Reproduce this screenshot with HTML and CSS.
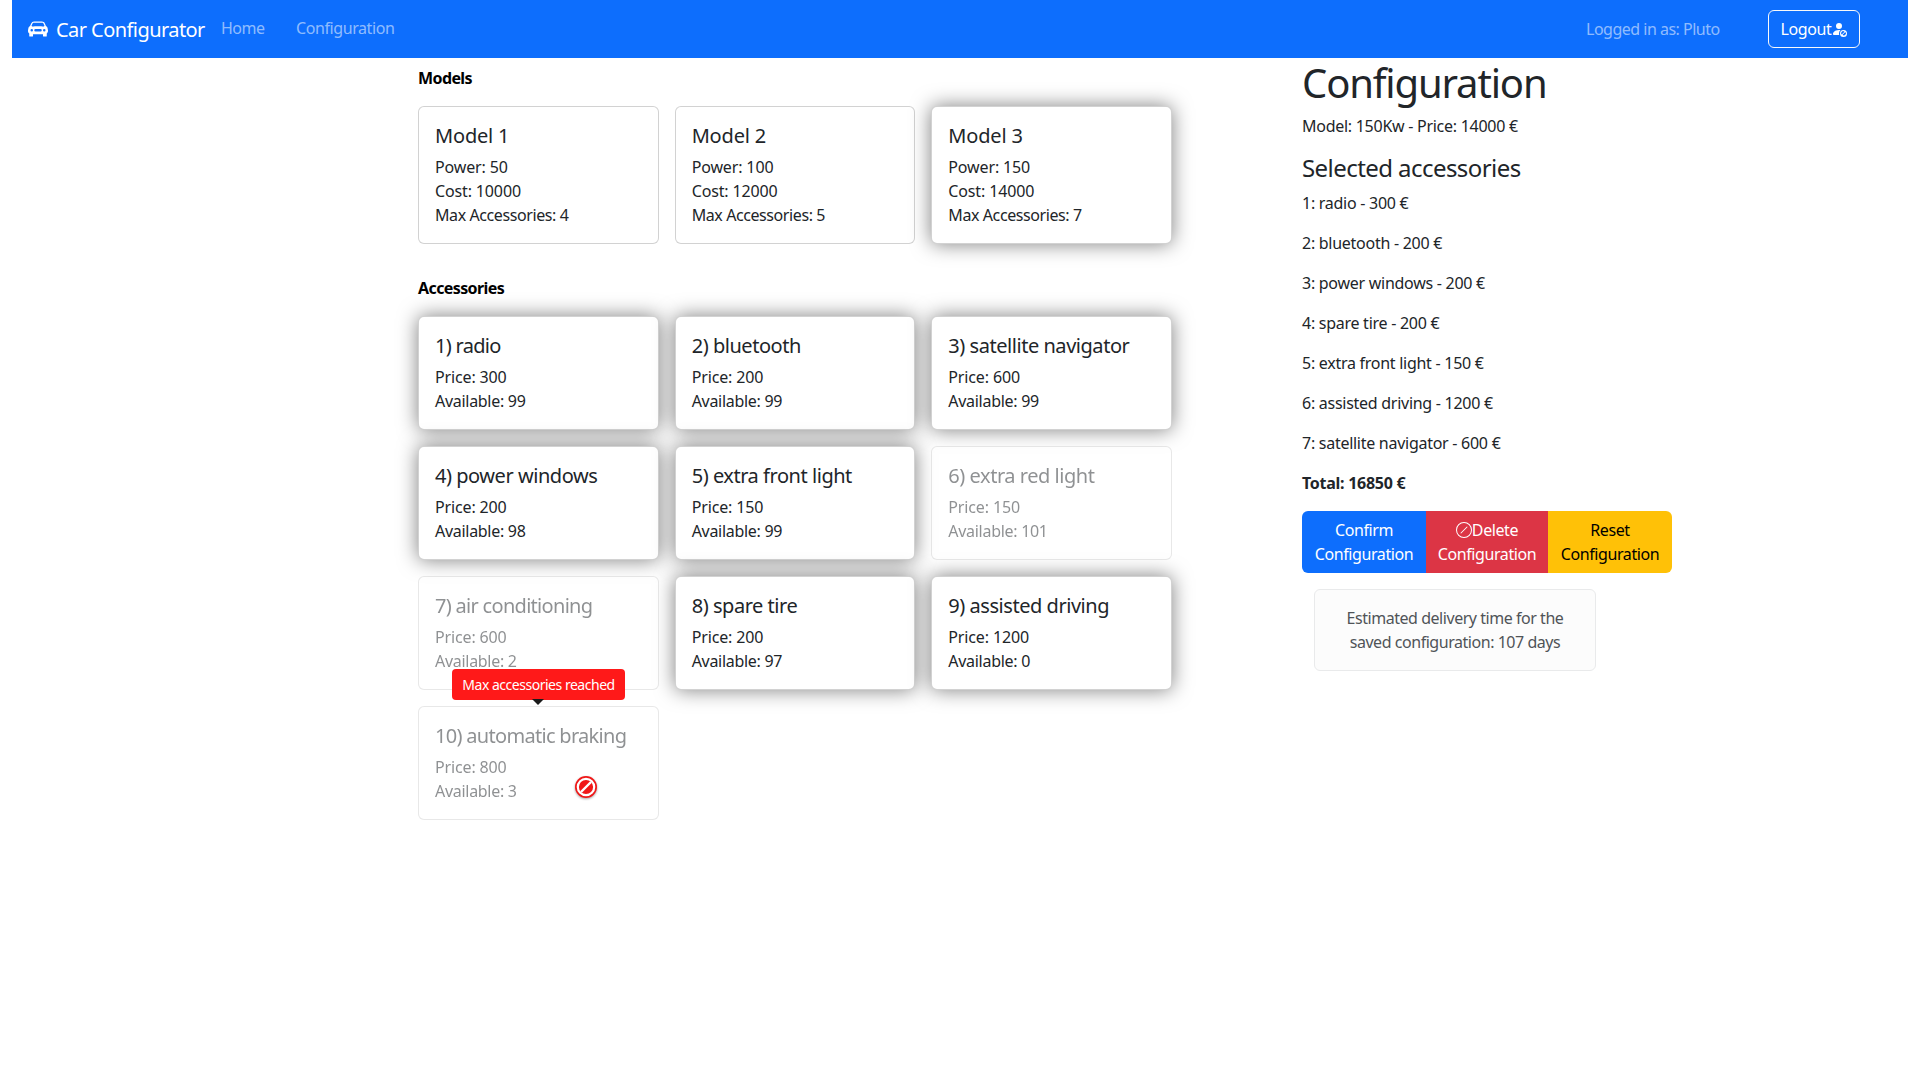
FILE: index.html
```html
<!DOCTYPE html>
<html lang="en">
<head>
<meta charset="utf-8">
<title>Car Configurator</title>
<link rel="stylesheet" href="styles.css">
</head>
<body>
<nav class="navbar">
  <a class="brand"><svg class="car" viewBox="0 0 16 16"><path fill-rule="evenodd" fill="currentColor" d="M2.52 3.515A2.5 2.5 0 0 1 4.82 2h6.362c1 0 1.904.596 2.298 1.515l.792 1.848c.075.175.21.319.38.404.5.25.855.715.965 1.262l.335 1.679c.033.161.049.325.049.49v.413c0 .814-.39 1.543-1 1.997V13.5a.5.5 0 0 1-.5.5h-2a.5.5 0 0 1-.5-.5v-1.338c-1.292.048-2.745.088-4 .088s-2.708-.04-4-.088V13.5a.5.5 0 0 1-.5.5h-2a.5.5 0 0 1-.5-.5v-1.892c-.61-.454-1-1.183-1-1.997v-.413a2.5 2.5 0 0 1 .049-.49l.335-1.68c.11-.546.465-1.012.964-1.261a.807.807 0 0 0 .381-.404l.792-1.848ZM3 10a1 1 0 1 0 0-2 1 1 0 0 0 0 2Zm10 0a1 1 0 1 0 0-2 1 1 0 0 0 0 2ZM6 8a1 1 0 0 0 0 2h4a1 1 0 1 0 0-2H6ZM2.906 5.189a.51.51 0 0 0 .497.731c.91-.073 3.35-.17 4.597-.17 1.247 0 3.688.097 4.597.17a.51.51 0 0 0 .497-.731l-.956-1.913A.5.5 0 0 0 11.691 3H4.309a.5.5 0 0 0-.447.276L2.906 5.19Z"/></svg><span class="brand-text">Car Configurator</span></a>
  <a class="nav-link home">Home</a>
  <a class="nav-link">Configuration</a>
  <span class="user">Logged in as: Pluto</span>
  <button class="logout">Logout<svg class="person" viewBox="0 0 16 16" fill="currentColor"><path d="M11 5a3 3 0 1 1-6 0 3 3 0 0 1 6 0Zm-9 8c0 1 1 1 1 1h5.256A4.493 4.493 0 0 1 8 12.5a4.49 4.49 0 0 1 1.544-3.393C9.077 9.038 8.564 9 8 9c-5 0-6 3-6 4Z"/><path d="M16 12.5a3.5 3.5 0 1 1-7 0 3.5 3.5 0 0 1 7 0Zm-1.679-1.493-2.828 2.829a1.5 1.5 0 0 0 2.828-2.83ZM10.707 13.5l2.828-2.829a2 2 0 0 0-2.828 2.829Z"/></svg></button>
</nav>
<main class="content">
  <section class="catalog">
    <h2 class="label">Models</h2>
    <div class="cards models">
      <article class="card"><h5>Model 1</h5><p>Power: 50</p><p>Cost: 10000</p><p class="limit">Max Accessories: 4</p></article>
      <article class="card"><h5>Model 2</h5><p>Power: 100</p><p>Cost: 12000</p><p class="limit">Max Accessories: 5</p></article>
      <article class="card selected"><h5>Model 3</h5><p>Power: 150</p><p>Cost: 14000</p><p class="limit">Max Accessories: 7</p></article>
    </div>
    <h2 class="label">Accessories</h2>
    <div class="cards">
      <article class="card selected"><h5 class="tight">1) radio</h5><p>Price: 300</p><p class="stock">Available: 99</p></article>
      <article class="card selected"><h5>2) bluetooth</h5><p>Price: 200</p><p class="stock">Available: 99</p></article>
      <article class="card selected"><h5>3) satellite navigator</h5><p>Price: 600</p><p class="stock">Available: 99</p></article>
      <article class="card selected"><h5>4) power windows</h5><p>Price: 200</p><p class="stock">Available: 98</p></article>
      <article class="card selected"><h5>5) extra front light</h5><p>Price: 150</p><p class="stock">Available: 99</p></article>
      <article class="card disabled"><h5>6) extra red light</h5><p>Price: 150</p><p class="stock">Available: 101</p></article>
      <article class="card disabled"><h5 class="tight">7) air conditioning</h5><p>Price: 600</p><p class="stock">Available: 2</p></article>
      <article class="card selected"><h5>8) spare tire</h5><p>Price: 200</p><p class="stock">Available: 97</p></article>
      <article class="card selected"><h5>9) assisted driving</h5><p>Price: 1200</p><p class="stock">Available: 0</p></article>
      <div class="anchor">
        <article class="card disabled"><h5 class="tight">10) automatic braking</h5><p>Price: 800</p><p class="stock">Available: 3</p></article>
        <div class="tooltip">Max accessories reached</div>
        <svg class="cursor" viewBox="0 0 24 24"><circle cx="12" cy="12" r="11" fill="#f01818"/><circle cx="12" cy="12" r="8.2" fill="none" stroke="#fff" stroke-width="2.2"/><path d="M7 17 17 7" stroke="#fff" stroke-width="2.4"/></svg>
      </div>
    </div>
  </section>
  <aside class="summary">
    <h1>Configuration</h1>
    <p>Model: 150Kw - Price: 14000 €</p>
    <h4>Selected accessories</h4>
    <p>1: radio - 300 €</p>
    <p>2: bluetooth - 200 €</p>
    <p>3: power windows - 200 €</p>
    <p>4: spare tire - 200 €</p>
    <p>5: extra front light - 150 €</p>
    <p>6: assisted driving - 1200 €</p>
    <p>7: satellite navigator - 600 €</p>
    <p class="total">Total: 16850 €</p>
    <div class="buttons">
      <button class="confirm">Confirm<br>Configuration</button>
      <button class="delete"><svg class="slash" viewBox="0 0 16 16" fill="currentColor"><path d="M8 15A7 7 0 1 1 8 1a7 7 0 0 1 0 14zm0 1A8 8 0 1 0 8 0a8 8 0 0 0 0 16z"/><path d="M11.354 4.646a.5.5 0 0 0-.708 0l-6 6a.5.5 0 0 0 .708.708l6-6a.5.5 0 0 0 0-.708z"/></svg>Delete<br>Configuration</button>
      <button class="reset">Reset<br>Configuration</button>
    </div>
    <div class="estimate">Estimated delivery time for the<br>saved configuration: 107 days</div>
  </aside>
</main>
</body>
</html>
```
FILE: styles.css
```css
* { box-sizing: border-box; }
body { margin: 0; padding: 0 12px; background: #fff; color: #212529; font: 400 16px/24px "Noto Sans", sans-serif; }
h1, h2, h4, h5, p { margin: 0; font-weight: 400; }
button { font: inherit; color: #fff; border: 0; white-space: nowrap; padding: 0; letter-spacing: -.4px; }
.navbar { height: 58px; background: #0d6efd; display: flex; align-items: center; padding: 0 48px 0 16px; color: #fff; white-space: nowrap; }
.brand { display: flex; align-items: center; gap: 8px; width: 193px; font-size: 20px; line-height: 30px; letter-spacing: -.56px; }
.brand-text { padding-top: 2px; }
.car { width: 20px; height: 20px; flex: none; }
.nav-link { color: rgba(255, 255, 255, .55); padding-bottom: 2px; letter-spacing: -.41px; }
.nav-link.home { width: 75px; letter-spacing: -.5px; }
.user { margin-left: auto; width: 182px; color: rgba(255, 255, 255, .55); letter-spacing: -.5px; }
.logout { width: 92px; height: 38px; background: transparent; border: 1px solid #f8f9fa; border-radius: 6px; display: flex; align-items: center; justify-content: center; }
.person { width: 16px; height: 16px; }
.content { display: flex; align-items: flex-start; }
.catalog { width: 754px; margin-left: 406px; padding-top: 8px; }
.label { font-size: 16px; font-weight: 700; line-height: 24px; color: #000; margin-bottom: 16px; letter-spacing: -.6px; }
.cards { display: grid; grid-template-columns: repeat(3, 1fr); gap: 16px; }
.models { margin-bottom: 32px; }
.card { background: #fff; border: 1px solid rgba(0, 0, 0, .175); border-radius: 6px; padding: 16px; white-space: nowrap; letter-spacing: -.14px; }
.card h5 { font-size: 20px; line-height: 24px; padding-top: 1px; margin-bottom: 7px; letter-spacing: -.46px; }
.card h5.tight { letter-spacing: -.7px; }
.models .card h5 { letter-spacing: -.18px; }
.card .limit { letter-spacing: -.41px; }
.card .stock { letter-spacing: -.29px; }
.selected { box-shadow: 0 0 20px rgba(0, 0, 0, .5); }
.disabled { opacity: .5; }
.anchor { position: relative; }
.tooltip { position: absolute; left: 34px; top: -37px; width: 173px; height: 31px; border-radius: 4px; background: #ff1919; color: #fff; font-size: 14px; line-height: 31px; letter-spacing: -.48px; text-align: center; white-space: nowrap; }
.tooltip::after { content: ""; position: absolute; left: 80px; top: 30px; border: 6px solid transparent; border-top-color: #1a1a1a; border-bottom: 0; }
.cursor { position: absolute; left: 156px; top: 69px; width: 24px; height: 24px; filter: drop-shadow(0 1px 1px rgba(0, 0, 0, .35)); }
.summary { width: 370px; margin-left: 130px; white-space: nowrap; }
.summary h1 { font-size: 40px; line-height: 48px; padding-top: 1px; margin-bottom: 7px; letter-spacing: -1.15px; }
.summary h4 { font-size: 24px; line-height: 28.8px; margin-bottom: 8px; letter-spacing: -.56px; }
.summary p { margin-bottom: 16px; letter-spacing: -.27px; }
.summary .total { font-weight: 700; }
.buttons { display: flex; height: 62px; border-radius: 6px; overflow: hidden; }
.buttons button { width: 124px; }
.buttons .confirm { background: #0d6efd; }
.buttons .delete { background: #dc3545; width: 122px; }
.buttons .reset { background: #ffc107; color: #000; }
.slash { width: 16px; height: 16px; vertical-align: -2px; }
.estimate { margin: 16px 0 0 12px; width: 282px; height: 82px; padding: 16px; border: 1px solid #e9eaeb; border-radius: 6px; background: #fcfcfc; color: #505458; letter-spacing: -.46px; text-align: center; }
```
